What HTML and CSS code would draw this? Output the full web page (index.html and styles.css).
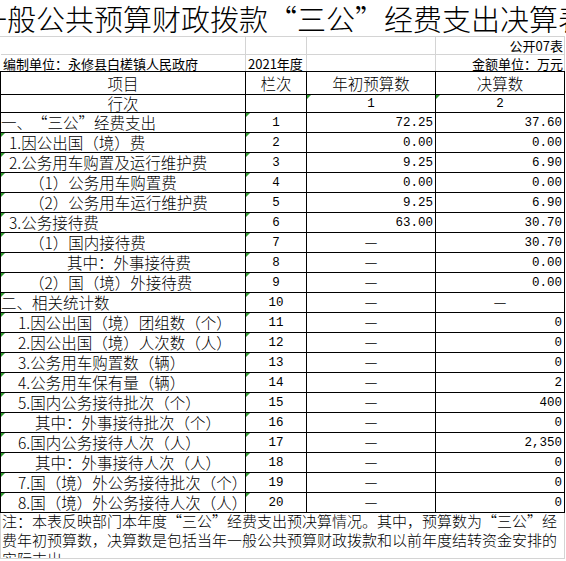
FILE: index.html
```html
<!DOCTYPE html>
<html lang="zh-CN">
<head>
<meta charset="utf-8">
<title>一般公共预算财政拨款“三公”经费支出决算表</title>
<link rel="stylesheet" href="styles.css">
</head>
<body>
<div class="sheet">
  <div class="title"><span>一般公共预算财政拨款“三公”经费支出决算表</span></div>
  <div class="meta">
    <div class="m"></div>
    <div class="m"></div>
    <div class="m"></div>
    <div class="m right">公开07表</div>
    <div class="m unit">编制单位：永修县白槎镇人民政府</div>
    <div class="m year">2021年度</div>
    <div class="m"></div>
    <div class="m right">金额单位：万元</div>
  </div>
  <div class="main">
    <div class="c center">项目</div>
    <div class="c center">栏次</div>
    <div class="c center">年初预算数</div>
    <div class="c center">决算数</div>

    <div class="c center">行次</div>
    <div class="c"></div>
    <div class="c center num g">1</div>
    <div class="c center num g">2</div>

    <div class="c i0">一、“三公”经费支出</div>
    <div class="c center num g">1</div>
    <div class="c right num">72.25</div>
    <div class="c right num">37.60</div>

    <div class="c i1 g">1.因公出国（境）费</div>
    <div class="c center num g">2</div>
    <div class="c right num">0.00</div>
    <div class="c right num">0.00</div>

    <div class="c i1 g">2.公务用车购置及运行维护费</div>
    <div class="c center num g">3</div>
    <div class="c right num">9.25</div>
    <div class="c right num">6.90</div>

    <div class="c i2 g">（1）公务用车购置费</div>
    <div class="c center num g">4</div>
    <div class="c right num">0.00</div>
    <div class="c right num">0.00</div>

    <div class="c i2 g">（2）公务用车运行维护费</div>
    <div class="c center num g">5</div>
    <div class="c right num">9.25</div>
    <div class="c right num">6.90</div>

    <div class="c i1 g">3.公务接待费</div>
    <div class="c center num g">6</div>
    <div class="c right num">63.00</div>
    <div class="c right num">30.70</div>

    <div class="c i2 g">（1）国内接待费</div>
    <div class="c center num g">7</div>
    <div class="c center">－</div>
    <div class="c right num">30.70</div>

    <div class="c i3 g">其中：外事接待费</div>
    <div class="c center num g">8</div>
    <div class="c center">－</div>
    <div class="c right num">0.00</div>

    <div class="c i2 g">（2）国（境）外接待费</div>
    <div class="c center num g">9</div>
    <div class="c center">－</div>
    <div class="c right num">0.00</div>

    <div class="c i0 g">二、相关统计数</div>
    <div class="c center num g">10</div>
    <div class="c center">－</div>
    <div class="c center">－</div>

    <div class="c i1b g">1.因公出国（境）团组数（个）</div>
    <div class="c center num g">11</div>
    <div class="c center">－</div>
    <div class="c right num">0</div>

    <div class="c i1b g">2.因公出国（境）人次数（人）</div>
    <div class="c center num g">12</div>
    <div class="c center">－</div>
    <div class="c right num">0</div>

    <div class="c i1b g">3.公务用车购置数（辆）</div>
    <div class="c center num g">13</div>
    <div class="c center">－</div>
    <div class="c right num">0</div>

    <div class="c i1b g">4.公务用车保有量（辆）</div>
    <div class="c center num g">14</div>
    <div class="c center">－</div>
    <div class="c right num">2</div>

    <div class="c i1b g">5.国内公务接待批次（个）</div>
    <div class="c center num g">15</div>
    <div class="c center">－</div>
    <div class="c right num">400</div>

    <div class="c i2b g">其中：外事接待批次（个）</div>
    <div class="c center num g">16</div>
    <div class="c center">－</div>
    <div class="c right num">0</div>

    <div class="c i1b g">6.国内公务接待人次（人）</div>
    <div class="c center num g">17</div>
    <div class="c center">－</div>
    <div class="c right num">2,350</div>

    <div class="c i2b g">其中：外事接待人次（人）</div>
    <div class="c center num g">18</div>
    <div class="c center">－</div>
    <div class="c right num">0</div>

    <div class="c i1b g">7.国（境）外公务接待批次（个）</div>
    <div class="c center num g">19</div>
    <div class="c center">－</div>
    <div class="c right num">0</div>

    <div class="c i1b g">8.国（境）外公务接待人次（人）</div>
    <div class="c center num g">20</div>
    <div class="c center">－</div>
    <div class="c right num">0</div>
  </div>
  <div class="note">
    <p>注：本表反映部门本年度“三公”经费支出预决算情况。其中，预算数为“三公”经<br>费年初预算数，决算数是包括当年一般公共预算财政拨款和以前年度结转资金安排的<br>实际支出。</p>
  </div>
</div>
</body>
</html>
```

FILE: styles.css
```css
html, body {
  margin: 0;
  padding: 0;
  background: #fff;
}

body {
  font-family: "Noto Sans CJK SC", "Noto Sans", sans-serif;
  color: #000;
  text-spacing-trim: space-all;
}

.sheet {
  width: 566px;
  height: 561px;
  overflow: hidden;
}

.title {
  width: 565px;
  height: 36px;
  display: flex;
  justify-content: center;
  align-items: center;
  border-bottom: 1px solid #d4d4d4;
  white-space: nowrap;
  font-size: 29px;
  font-weight: 300;
  line-height: 36px;
}

.meta {
  display: grid;
  grid-template-columns: 244px 60px 128px 128px;
  grid-template-rows: 17px 16px;
  gap: 1px;
  width: max-content;
  background: #d4d4d4;
  border-left: 1px solid #fff;
  padding-right: 1px;
}

.m {
  background: #fff;
  font-size: 13px;
  line-height: 17px;
  white-space: nowrap;
  display: flex;
  align-items: center;
}

.m.right {
  justify-content: flex-end;
  padding-right: 1px;
}

.m.unit,
.m.year {
  padding-left: 2px;
}

.main {
  display: grid;
  grid-template-columns: 244px 60px 128px 128px;
  grid-template-rows: 22px 17px repeat(20, 19px);
  gap: 1px;
  padding: 1px;
  width: max-content;
  background: #000;
}

.c {
  background: #fff;
  font-size: 15.5px;
  font-weight: 300;
  line-height: 19px;
  white-space: nowrap;
  display: flex;
  align-items: center;
  position: relative;
}

.c.center {
  justify-content: center;
}

.c.right {
  justify-content: flex-end;
  padding-right: 2px;
}

.num {
  font-family: "Liberation Mono", "DejaVu Sans Mono", monospace;
  font-size: 12.5px;
  font-weight: 400;
  padding-top: 2px;
}

.i0 { padding-left: 0; }
.i1 { padding-left: 8px; }
.i1b { padding-left: 17px; }
.i2 { padding-left: 28px; }
.i2b { padding-left: 34px; }
.i3 { padding-left: 66px; }

.g::before {
  content: "";
  position: absolute;
  left: 0;
  top: 0;
  border-top: 4px solid #2f9a2f;
  border-right: 4px solid transparent;
}

.note {
  width: 563px;
  height: 45px;
  overflow: hidden;
  border: 1px solid #d4d4d4;
  border-top: none;
}

.note p {
  margin: -2px 0 0 1px;
  font-size: 15px;
  font-weight: 300;
  line-height: 19px;
  white-space: nowrap;
}
```
